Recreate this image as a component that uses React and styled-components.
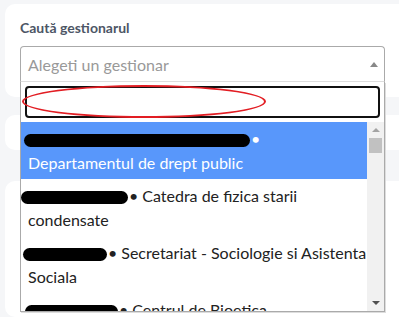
import styled, { createGlobalStyle } from "styled-components"

const GlobalStyle = createGlobalStyle`
  html, body {
    margin: 0;
    padding: 0;
    background: #f5f6f8;
    font-family: Lato, "Liberation Sans", sans-serif;
    overflow: hidden;
  }
`

const Page = styled.div`
  width: 399px;
  height: 317px;
  padding: 4px 0 0 5px;
  box-sizing: border-box;
  display: flex;
  flex-direction: column;
  overflow: hidden;
`

const Card = styled.div`
  background: #fff;
  border-radius: 10px;
  height: ${p => p.h}px;
  flex-shrink: 0;
  margin: 0 -20px ${p => p.mb || 0}px 0;
  position: relative;
  box-sizing: border-box;
  padding: 14px 0 0 15px;
`

const Label = styled.div`
  font-size: 14px;
  font-weight: 700;
  color: #4d5666;
  line-height: 20px;
  margin-bottom: 8px;
`

const SelectWrap = styled.div`
  position: relative;
  width: 365px;
  z-index: 5;
`

const Selection = styled.div`
  height: 36px;
  box-sizing: border-box;
  border: 1px solid #aaa;
  border-bottom-color: #ddd;
  border-radius: 4px 4px 0 0;
  background: #fff;
  display: flex;
  align-items: center;
  justify-content: space-between;
  padding: 0 8px 0 7px;
  font-size: 16px;
  color: #999;
`

const Arrow = styled.span`
  width: 0;
  height: 0;
  border-left: 4px solid transparent;
  border-right: 4px solid transparent;
  border-bottom: 5px solid #888;
  margin-right: -2px;
`

const Dropdown = styled.div`
  position: absolute;
  top: 36px;
  left: 0;
  width: 365px;
  height: 230px;
  box-sizing: border-box;
  background: #fff;
  border: 1px solid #aaa;
  border-top: none;
  box-shadow: 1px 1px 0 #ddd;
  display: flex;
  flex-direction: column;
`

const SearchBox = styled.div`
  padding: 4px;
  position: relative;
`

const SearchInput = styled.div`
  height: 32px;
  box-sizing: border-box;
  border: 2px solid #111;
  border-radius: 4px;
`

const Ellipse = styled.div`
  position: absolute;
  left: 1px;
  top: 3px;
  width: 244px;
  height: 33px;
  box-sizing: border-box;
  border: 2px solid #e21d23;
  border-radius: 50%;
`

const Results = styled.div`
  flex: 1;
  display: flex;
  overflow: hidden;
`

const List = styled.ul`
  list-style: none;
  margin: 0;
  padding: 0;
  flex: 1;
  overflow: hidden;
`

const Option = styled.li`
  padding: 5px 2px 4px 7px;
  font-size: 16px;
  line-height: 24px;
  white-space: nowrap;
  color: ${p => (p.active ? "#fff" : "#222")};
  background: ${p => (p.active ? "#5897fb" : "transparent")};
`

const Line = styled.div``

const Redacted = styled.span`
  display: inline-block;
  vertical-align: middle;
  width: ${p => p.w}px;
  height: 13px;
  margin-left: ${p => p.off}px;
  background: #000;
  border-radius: 7px;
`

const Bullet = styled.span`
  margin: 0 4px 0 1px;
`

const Scrollbar = styled.div`
  width: 17px;
  background: #f1f1f1;
  display: flex;
  flex-direction: column;
  align-items: center;
`

const ScrollArrow = styled.span`
  width: 0;
  height: 0;
  margin: 6px 0;
  border-left: 4px solid transparent;
  border-right: 4px solid transparent;
  ${p => (p.down ? "border-top: 4px solid #505050;" : "border-bottom: 4px solid #a3a3a3;")}
`

const Thumb = styled.div`
  width: 13px;
  height: 15px;
  background: #c1c1c1;
`

const Spacer = styled.div`
  flex: 1;
`

const options = [
  { w: 226, off: -4, lines: ["", "Departamentul de drept public"], active: true },
  { w: 107, off: -7, lines: ["Catedra de fizica starii", "condensate"] },
  { w: 84, off: -5, lines: ["Secretariat - Sociologie si Asistenta", "Sociala"] },
  { w: 93, off: -3, lines: ["Centrul de Bioetica"] },
]

export default function App() {
  return (
    <>
      <GlobalStyle />
      <Page>
        <Card h={93} mb={18}>
          <Label>Caută gestionarul</Label>
          <SelectWrap>
            <Selection>
              <span>Alegeti un gestionar</span>
              <Arrow />
            </Selection>
            <Dropdown>
              <SearchBox>
                <SearchInput />
                <Ellipse />
              </SearchBox>
              <Results>
                <List>
                  {options.map((o, i) => (
                    <Option key={i} active={o.active}>
                      <Line>
                        <Redacted w={o.w} off={o.off} />
                        <Bullet>•</Bullet>
                        {o.lines[0]}
                      </Line>
                      {o.lines[1] && <Line>{o.lines[1]}</Line>}
                    </Option>
                  ))}
                </List>
                <Scrollbar>
                  <ScrollArrow />
                  <Thumb />
                  <Spacer />
                  <ScrollArrow down />
                </Scrollbar>
              </Results>
            </Dropdown>
          </SelectWrap>
        </Card>
        <Card h={35} mb={31} />
        <Card h={136} />
      </Page>
    </>
  )
}
